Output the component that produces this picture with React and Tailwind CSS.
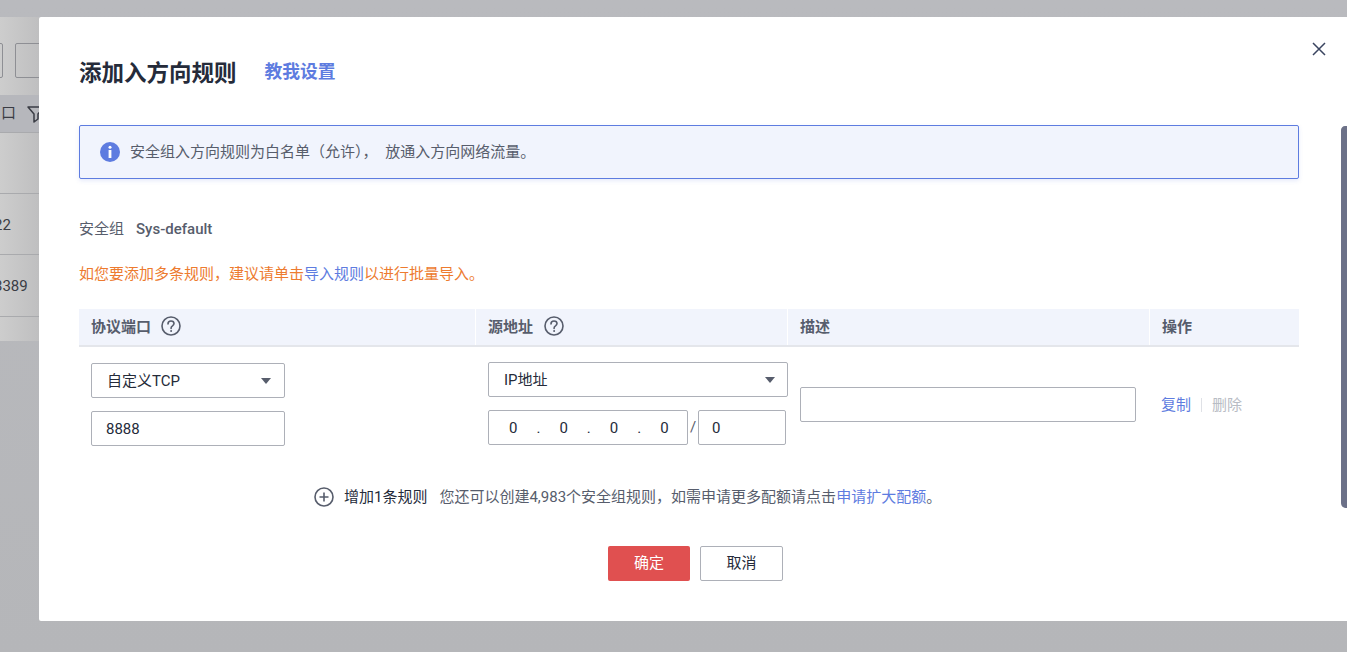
import React from "react";

function Help() {
  return (
    <svg width="20" height="20" viewBox="0 0 20 20" fill="none" className="shrink-0 mt-[-2px]">
      <circle cx="10" cy="10" r="9" stroke="#575d6c" strokeWidth="1.6" />
      <path d="M7 7.9c0-1.7 1.3-2.9 3-2.9s3 1.1 3 2.6c0 1.1-.7 1.7-1.5 2.3-.9.6-1.4 1.1-1.4 2v.5" stroke="#575d6c" strokeWidth="1.6" strokeLinecap="round" />
      <circle cx="10.1" cy="15.1" r="1" fill="#575d6c" />
    </svg>
  );
}

function Caret() {
  return <span className="w-0 h-0 border-l-[5px] border-r-[5px] border-t-[6px] border-l-transparent border-r-transparent border-t-[#575d6c]" />;
}

function Field({ className, children }) {
  return <div className={"flex items-center h-[35px] rounded-[2px] border border-[#adb0b8] bg-white text-[#252b3a] " + className}>{children}</div>;
}

export default function App() {
  return (
    <div className="relative w-[1347px] h-[652px] overflow-hidden bg-gradient-to-b from-[#b9babe] to-[#b5b6b9] text-[15px] text-[#575d6c] font-['Roboto','Noto_Sans_CJK_SC',sans-serif]">
      {/* dimmed page behind the dialog */}
      <div className="w-[39px] h-[652px] pt-[17px] overflow-hidden">
        <div className="w-[39px] h-[324px] bg-gradient-to-r from-[#cdcdcd] to-[#bfbfc0] flex flex-col overflow-hidden">
          <div className="h-[26px] shrink-0" />
          <div className="h-[35px] shrink-0 flex gap-[12px] ml-[-9px] w-[80px]">
            <div className="w-[12px] h-[35px] shrink-0 rounded-[2px] border border-[#8e8f94]" />
            <div className="w-[40px] h-[35px] shrink-0 rounded-[2px] border border-[#8e8f94]" />
          </div>
          <div className="h-[17px] shrink-0" />
          <div className="h-[38px] shrink-0 bg-[#b6b7bc] border-b border-[#a9aaad] flex items-center text-[#3a3c44] whitespace-nowrap">
            <span className="ml-[1px] w-[15px] shrink-0 overflow-hidden">口</span>
            <svg width="20" height="20" viewBox="0 0 20 20" fill="none" className="shrink-0 ml-[10px]">
              <path d="M2 3h16l-6 7v5l-4 3v-8z" stroke="#3a3c44" strokeWidth="1.5" strokeLinejoin="round" />
            </svg>
          </div>
          <div className="h-[61px] shrink-0 border-b border-[#a9aaad]" />
          <div className="h-[61px] shrink-0 border-b border-[#a9aaad] flex items-center text-[#3a3c44] pt-[2px]"><span className="ml-[-6px]">22</span></div>
          <div className="h-[62px] shrink-0 border-b border-[#a9aaad] flex items-center text-[#3a3c44] pt-[2px]"><span className="ml-[-6px]">3389</span></div>
        </div>
      </div>

      {/* dialog */}
      <div className="absolute left-[39px] top-[17px] w-[1308px] h-[604px] bg-white rounded-tl-[2px] rounded-bl-[2px] pl-[40px] flex flex-col">
        <svg width="14" height="14" viewBox="0 0 14 14" fill="none" className="absolute right-[21px] top-[25px]">
          <path d="M1 1l12 12M13 1L1 13" stroke="#3a4560" strokeWidth="1.5" />
        </svg>
        <svg className="absolute right-0 top-[109px]" width="6" height="382" viewBox="0 0 6 382">
          <path d="M6 0H4C1.8 0 0 1.8 0 4v373c0 3 2 5 6 5z" fill="#6c7188" />
        </svg>

        <div className="h-[34px] mt-[39px] flex items-center">
          <h1 className="text-[22.5px] leading-[34px] font-bold text-[#252b3a]">添加入方向规则</h1>
          <a className="ml-[28px] text-[17.8px] font-bold text-[#5e7ce0] mt-[-2px]">教我设置</a>
        </div>

        <div className="mt-[35px] w-[1220px] h-[54px] shrink-0 rounded-[2px] border border-[#5e7ce0] bg-[#f1f4fd] shadow-[0_2px_4px_rgba(94,124,224,0.15)] flex items-center pl-[20px]">
          <svg width="20" height="20" viewBox="0 0 20 20" className="shrink-0">
            <circle cx="10" cy="10" r="10" fill="#5e7ce0" />
            <circle cx="10" cy="5.3" r="1.5" fill="#fff" />
            <rect x="8.6" y="8" width="2.8" height="8" fill="#fff" />
          </svg>
          <span className="ml-[10px] text-[#575d6c] whitespace-nowrap">安全组入方向规则为白名单（允许）， <span className="ml-[4px]">放通入方向网络流量。</span></span>
        </div>

        <div className="mt-[39px] h-[22px] leading-[22px] flex items-center">
          <span>安全组</span>
          <span className="ml-[12px] font-medium">Sys-default</span>
        </div>

        <p className="mt-[23px] h-[22px] leading-[22px] text-[#ed7b2f]">
          如您要添加多条规则，建议请单击<a className="text-[#5e7ce0]">导入规则</a>以进行批量导入。
        </p>

        {/* table */}
        <div className="mt-[24px] w-[1220px] h-[38px] shrink-0 flex gap-[1px] font-bold text-[#575d6c] border-b-2 border-[#e4e6eb]">
          <div className="w-[396px] bg-[#f1f4fc] pl-[12px] flex items-center gap-[10px]"><span className="mt-[1px]">协议端口</span><Help /></div>
          <div className="w-[311px] bg-[#f1f4fc] pl-[12px] flex items-center gap-[11px]"><span className="mt-[1px]">源地址</span><Help /></div>
          <div className="w-[361px] bg-[#f1f4fc] pl-[12px] flex items-center"><span className="mt-[1px]">描述</span></div>
          <div className="flex-1 bg-[#f1f4fc] pl-[12px] flex items-center"><span className="mt-[1px]">操作</span></div>
        </div>

        <div className="w-[1220px] h-[100px] shrink-0 flex mt-[15px]">
          <div className="w-[397px] pl-[12px] flex flex-col gap-[13px] pt-[1px]">
            <Field className="w-[194px] pl-[15px] pr-[13px] justify-between"><span className="mt-[1px]">自定义TCP</span><Caret /></Field>
            <Field className="w-[194px] pl-[14px]"><span className="mt-[1px]">8888</span></Field>
          </div>
          <div className="w-[312px] pl-[12px] flex flex-col gap-[13px]">
            <Field className="w-[300px] pl-[15px] pr-[12px] justify-between"><span className="mt-[1px]">IP地址</span><Caret /></Field>
            <div className="flex items-center">
              <Field className="w-[200px] pl-[20px]">
                <span className="flex items-center gap-[19px] whitespace-nowrap mt-[1px]">
                  <span>0</span><span>.</span><span>0</span><span>.</span><span>0</span><span>.</span><span>0</span>
                </span>
              </Field>
              <span className="w-[10px] text-center text-[#575d6c]">/</span>
              <Field className="w-[88px] pl-[13px]"><span className="mt-[1px]">0</span></Field>
            </div>
          </div>
          <div className="w-[361px] pl-[12px] pt-[25px]">
            <Field className="w-[336px]" />
          </div>
          <div className="pl-[12px] pt-[32px] flex items-start h-[60px]">
            <a className="text-[#5e7ce0] leading-[22px]">复制</a>
            <span className="mx-[10px] mt-[4px] w-px h-[14px] bg-[#dfe1e6]" />
            <a className="text-[#b8bcc4] leading-[22px]">删除</a>
          </div>
        </div>

        <div className="mt-[24px] ml-[235px] h-[22px] flex items-center whitespace-nowrap">
          <svg width="20" height="20" viewBox="0 0 20 20" fill="none" className="shrink-0">
            <circle cx="10" cy="10" r="9" stroke="#575d6c" strokeWidth="1.6" />
            <path d="M10 5.5v9M5.5 10h9" stroke="#575d6c" strokeWidth="1.6" />
          </svg>
          <span className="ml-[10px] text-[#252b3a]">增加1条规则</span>
          <span className="ml-[12px]">您还可以创建4,983个安全组规则，如需申请更多配额请点击<a className="text-[#5e7ce0]">申请扩大配额</a>。</span>
        </div>

        <div className="mt-[38px] ml-[529px] flex gap-[10px]">
          <button className="w-[82px] h-[35px] rounded-[2px] bg-[#e05050] text-white">确定</button>
          <button className="w-[83px] h-[35px] rounded-[2px] border border-[#adb0b8] bg-white text-[#252b3a]">取消</button>
        </div>
      </div>
    </div>
  );
}
